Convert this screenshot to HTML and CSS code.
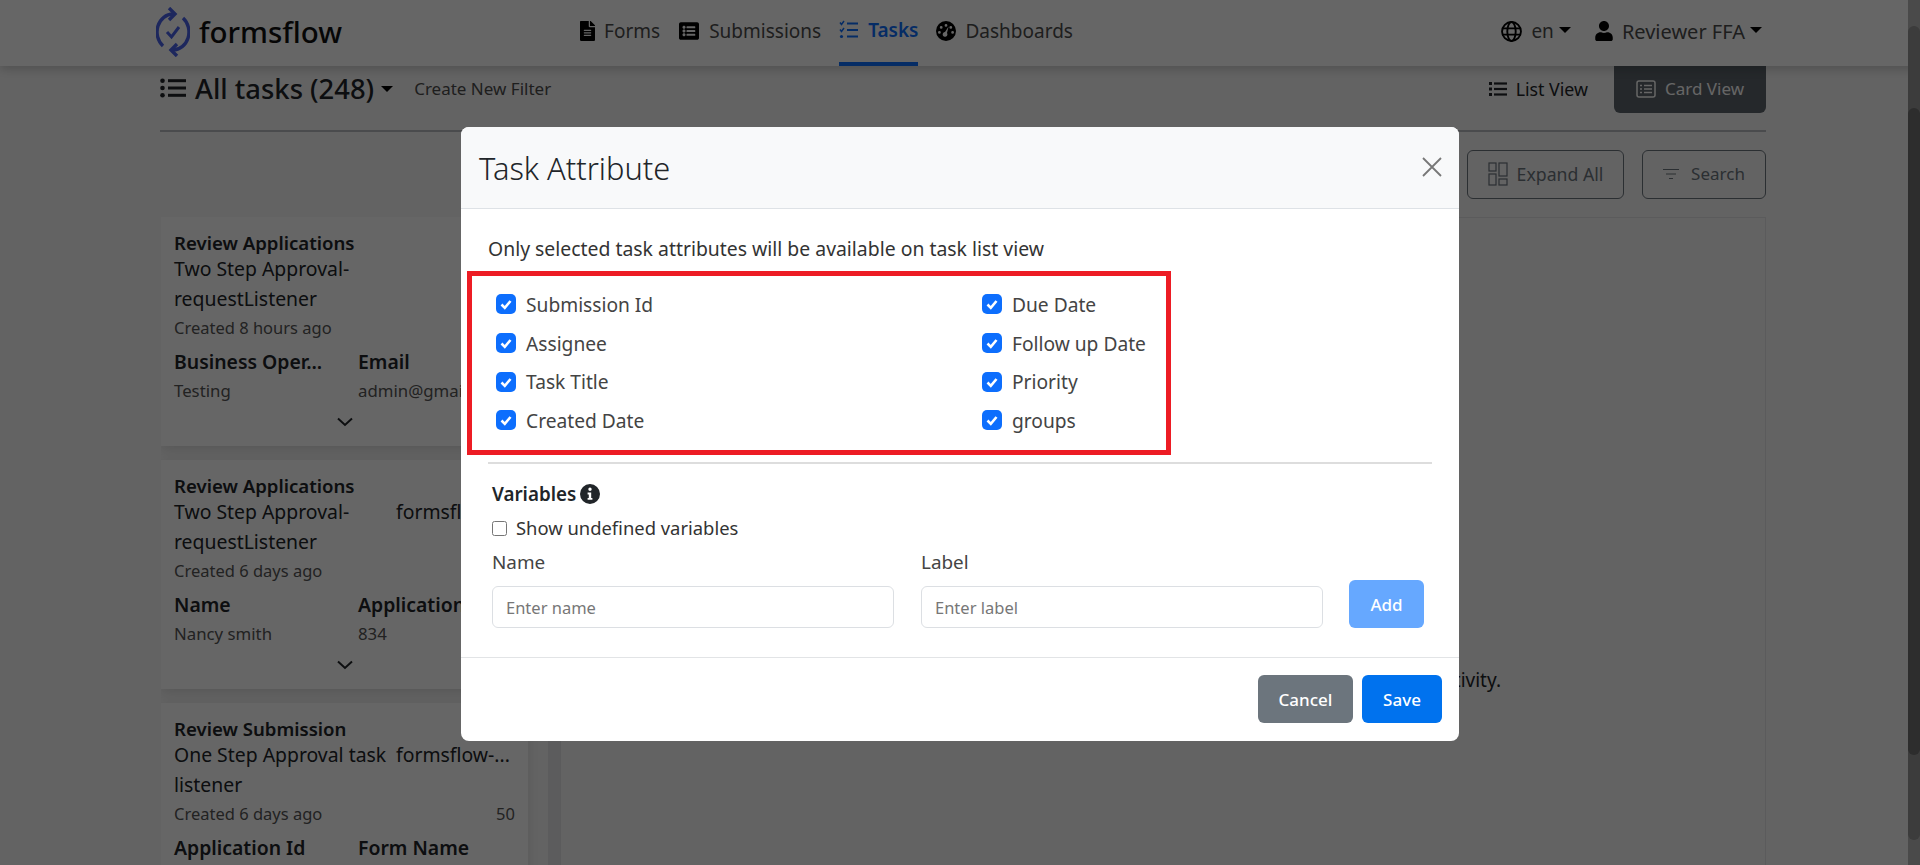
FILE: index.html
```html
<!DOCTYPE html>
<html lang="en">
<head>
    <meta charset="UTF-8">
    <meta name="viewport" content="width=device-width, initial-scale=1.0">
    <title>formsflow</title>
    <link rel="stylesheet" href="styles.css">
</head>
<body>
    <header class="topbar">
        <a class="logo">
            <svg class="logo-mark" viewBox="0 0 34 50" fill="none" stroke="#4a63e8">
                <path d="M17 7 A16 18 0 0 0 7 39" stroke-width="3.4"/>
                <path d="M13 1 L19 7 L13 13" stroke-width="3.4"/>
                <path d="M17 43 A16 18 0 0 0 27 11" stroke-width="3.4"/>
                <path d="M21 37 L15 43 L21 49" stroke-width="3.4"/>
                <path d="M11 25 L15.5 30 L23 20" stroke-width="3"/>
            </svg>
            <span>formsflow</span>
        </a>
        <nav class="nav">
            <a class="nav-item">
                <svg class="icon-forms" viewBox="0 0 384 512"><path d="M224 136V0H24C10.7 0 0 10.7 0 24v464c0 13.3 10.7 24 24 24h336c13.3 0 24-10.7 24-24V160H248c-13.2 0-24-10.8-24-24zm64 236c0 6.6-5.4 12-12 12H108c-6.6 0-12-5.4-12-12v-8c0-6.6 5.4-12 12-12h168c6.6 0 12 5.4 12 12v8zm0-64c0 6.6-5.4 12-12 12H108c-6.6 0-12-5.4-12-12v-8c0-6.6 5.4-12 12-12h168c6.6 0 12 5.4 12 12v8zm0-72v8c0 6.6-5.4 12-12 12H108c-6.6 0-12-5.4-12-12v-8c0-6.6 5.4-12 12-12h168c6.6 0 12 5.4 12 12zm96-114.1v6.1H256V0h6.1c6.4 0 12.5 2.5 17 7l97.9 98c4.5 4.5 7 10.6 7 16.9z"/></svg>
                Forms
            </a>
            <a class="nav-item">
                <svg class="icon-subs" viewBox="0 0 512 512"><path d="M464 480H48c-26.51 0-48-21.49-48-48V80c0-26.51 21.49-48 48-48h416c26.51 0 48 21.49 48 48v352c0 26.51-21.49 48-48 48zM128 120c-22.091 0-40 17.909-40 40s17.909 40 40 40 40-17.909 40-40-17.909-40-40-40zm0 96c-22.091 0-40 17.909-40 40s17.909 40 40 40 40-17.909 40-40-17.909-40-40-40zm0 96c-22.091 0-40 17.909-40 40s17.909 40 40 40 40-17.909 40-40-17.909-40-40-40zm288-136v-32c0-6.627-5.373-12-12-12H204c-6.627 0-12 5.373-12 12v32c0 6.627 5.373 12 12 12h200c6.627 0 12-5.373 12-12zm0 96v-32c0-6.627-5.373-12-12-12H204c-6.627 0-12 5.373-12 12v32c0 6.627 5.373 12 12 12h200c6.627 0 12-5.373 12-12zm0 96v-32c0-6.627-5.373-12-12-12H204c-6.627 0-12 5.373-12 12v32c0 6.627 5.373 12 12 12h200c6.627 0 12-5.373 12-12z"/></svg>
                Submissions
            </a>
            <a class="nav-item active">
                <svg class="icon-tasks" viewBox="0 0 20 20" fill="none" stroke="currentColor">
                    <path d="M1 2.5 L2.5 4.5 L5 1" stroke-width="1.5"/>
                    <path d="M1 9.5 L2.5 11.5 L5 8" stroke-width="1.5"/>
                    <circle cx="2.5" cy="16.5" r="1.6" fill="currentColor" stroke="none"/>
                    <path d="M8 3.5 H19 M8 10 H19 M8 16.5 H19" stroke-width="2.2"/>
                </svg>
                Tasks
            </a>
            <a class="nav-item">
                <svg class="icon-dash" viewBox="0 0 20 20">
                    <path fill-rule="evenodd" d="M10 0a10 10 0 1 1 0 20a10 10 0 0 1 0-20zM10 3a1.4 1.4 0 1 0 0 2.8a1.4 1.4 0 0 0 0-2.8zM5.2 5a1.4 1.4 0 1 0 0 2.8a1.4 1.4 0 0 0 0-2.8zM14.8 5a1.4 1.4 0 1 0 0 2.8a1.4 1.4 0 0 0 0-2.8zM3.4 10a1.4 1.4 0 1 0 0 2.8a1.4 1.4 0 0 0 0-2.8zM16.6 10a1.4 1.4 0 1 0 0 2.8a1.4 1.4 0 0 0 0-2.8zM12.6 5.6L9 11a2.4 2.4 0 1 0 2 1z"/>
                </svg>
                Dashboards
            </a>
        </nav>
        <div class="topbar-right">
            <a class="nav-item lang">
                <svg class="icon-globe" viewBox="0 0 20 20" fill="none" stroke="currentColor" stroke-width="1.8">
                    <circle cx="10" cy="10" r="9"/>
                    <ellipse cx="10" cy="10" rx="4" ry="9"/>
                    <path d="M1 7 H19 M1 13 H19"/>
                </svg>
                en<i class="caret"></i>
            </a>
            <a class="nav-item user">
                <svg class="icon-user" viewBox="0 0 448 512"><path d="M224 256c70.7 0 128-57.3 128-128S294.7 0 224 0 96 57.3 96 128s57.3 128 128 128zm89.6 32h-16.7c-22.2 10.2-46.9 16-72.9 16s-50.6-5.8-72.9-16h-16.7C60.2 288 0 348.2 0 422.4V464c0 26.5 21.5 48 48 48h352c26.5 0 48-21.5 48-48v-41.6c0-74.2-60.2-134.4-134.4-134.4z"/></svg>
                Reviewer FFA<i class="caret"></i>
            </a>
        </div>
    </header>

    <main class="page">
        <div class="toolbar">
            <div class="filter-title">
                <svg class="icon-list-lg" viewBox="0 0 26 20">
                    <circle cx="2.5" cy="2.8" r="2.3"/><circle cx="2.5" cy="10" r="2.3"/><circle cx="2.5" cy="17.2" r="2.3"/>
                    <rect x="8" y="1.2" width="18" height="3"/><rect x="8" y="8.5" width="18" height="3"/><rect x="8" y="15.8" width="18" height="3"/>
                </svg>
                <h1>All tasks (248)</h1>
                <i class="caret"></i>
                <a class="new-filter">Create New Filter</a>
            </div>
            <div class="view-switch">
                <a class="view-list">
                    <svg viewBox="0 0 18 16">
                        <rect x="0" y="1" width="3" height="3"/><rect x="0" y="6.5" width="3" height="3"/><rect x="0" y="12" width="3" height="3"/>
                        <rect x="5" y="1.4" width="13" height="2.2"/><rect x="5" y="6.9" width="13" height="2.2"/><rect x="5" y="12.4" width="13" height="2.2"/>
                    </svg>
                    List View
                </a>
                <a class="view-card">
                    <svg viewBox="0 0 20 18" fill="none" stroke="currentColor" stroke-width="1.5">
                        <rect x="1" y="1" width="18" height="16" rx="2"/>
                        <path d="M4 5.5 H6 M8 5.5 H16 M4 9 H6 M8 9 H16 M4 12.5 H6 M8 12.5 H16"/>
                    </svg>
                    Card View
                </a>
            </div>
        </div>

        <div class="actions">
            <a class="outline-btn">
                <svg class="icon-expand" viewBox="0 0 20 24" fill="none" stroke="currentColor" stroke-width="1.2">
                    <rect x="1" y="1" width="7" height="8"/><rect x="11" y="1" width="8" height="13"/>
                    <rect x="1" y="12" width="7" height="11"/><rect x="11" y="17" width="8" height="6"/>
                </svg>
                Expand All
            </a>
            <a class="outline-btn search-btn">
                <svg class="icon-filter" viewBox="0 0 16 12" fill="none" stroke="currentColor" stroke-width="1.2">
                    <path d="M0 1.5 H16 M3 6 H13 M6 10.5 H10"/>
                </svg>
                Search
            </a>
        </div>

        <div class="content">
            <div class="task-list">
                <article class="task-card">
                    <h3>Review Applications</h3>
                    <div class="task-row">
                        <div class="task-name">Two Step Approval-requestListener</div>
                        <div class="task-app"></div>
                    </div>
                    <div class="task-meta"><span>Created 8 hours ago</span></div>
                    <div class="task-vars">
                        <div><b>Business Oper...</b><span>Testing</span></div>
                        <div><b>Email</b><span>admin@gmail.com</span></div>
                    </div>
                    <svg class="chevron" viewBox="0 0 16 10" fill="none" stroke="currentColor" stroke-width="2"><path d="M1 1.5 L8 8 L15 1.5"/></svg>
                </article>
                <article class="task-card">
                    <h3>Review Applications</h3>
                    <div class="task-row">
                        <div class="task-name">Two Step Approval-requestListener</div>
                        <div class="task-app">formsflow-...</div>
                    </div>
                    <div class="task-meta"><span>Created 6 days ago</span></div>
                    <div class="task-vars">
                        <div><b>Name</b><span>Nancy smith</span></div>
                        <div><b>Application Id</b><span>834</span></div>
                    </div>
                    <svg class="chevron" viewBox="0 0 16 10" fill="none" stroke="currentColor" stroke-width="2"><path d="M1 1.5 L8 8 L15 1.5"/></svg>
                </article>
                <article class="task-card">
                    <h3>Review Submission</h3>
                    <div class="task-row">
                        <div class="task-name">One Step Approval task listener</div>
                        <div class="task-app">formsflow-...</div>
                    </div>
                    <div class="task-meta"><span>Created 6 days ago</span><span>50</span></div>
                    <div class="task-vars">
                        <div><b>Application Id</b></div>
                        <div><b>Form Name</b></div>
                    </div>
                </article>
            </div>
            <section class="task-detail">
                <p>Please select a task from the list to view its details and activity.</p>
            </section>
        </div>
    </main>

    <div class="backdrop">
        <div class="modal">
            <div class="modal-header">
                <h2>Task Attribute</h2>
                <svg class="modal-close" viewBox="0 0 20 20" fill="none" stroke="currentColor" stroke-width="1.8"><path d="M1 1 L19 19 M19 1 L1 19"/></svg>
            </div>
            <div class="modal-body">
                <p class="hint">Only selected task attributes will be available on task list view</p>
                <div class="attr-grid">
                    <label class="attr"><input type="checkbox" checked> Submission Id</label>
                    <label class="attr"><input type="checkbox" checked> Due Date</label>
                    <label class="attr"><input type="checkbox" checked> Assignee</label>
                    <label class="attr"><input type="checkbox" checked> Follow up Date</label>
                    <label class="attr"><input type="checkbox" checked> Task Title</label>
                    <label class="attr"><input type="checkbox" checked> Priority</label>
                    <label class="attr"><input type="checkbox" checked> Created Date</label>
                    <label class="attr"><input type="checkbox" checked> groups</label>
                </div>
                <hr class="divider">
                <div class="variables">
                    <h4>Variables
                        <svg class="icon-info" viewBox="0 0 20 20">
                            <path fill-rule="evenodd" d="M10 0a10 10 0 1 1 0 20a10 10 0 0 1 0-20zM10 3.6a1.7 1.7 0 1 0 0 3.4a1.7 1.7 0 0 0 0-3.4zM7.6 8.6v1.8h1.2v3.6H7.6v1.8h4.8v-1.8h-1.2V8.6z"/>
                        </svg>
                    </h4>
                    <label class="show-undefined"><input type="checkbox"> Show undefined variables</label>
                    <div class="var-form">
                        <div class="field">
                            <label>Name</label>
                            <input type="text" placeholder="Enter name">
                        </div>
                        <div class="field">
                            <label>Label</label>
                            <input type="text" placeholder="Enter label">
                        </div>
                        <button class="btn btn-add">Add</button>
                    </div>
                </div>
            </div>
            <div class="modal-footer">
                <button class="btn btn-cancel">Cancel</button>
                <button class="btn btn-save">Save</button>
            </div>
        </div>
    </div>

    <div class="scrollbar"><div class="thumb-outer"></div><div class="thumb-inner"></div></div>
</body>
</html>
```

FILE: styles.css
```css
* {
    box-sizing: border-box;
}
html, body {
    height: 100%;
}
body {
    margin: 0;
    overflow: hidden;
    background-color: #f8f8f8;
    color: #212529;
    font-family: "Noto Sans", Arial, sans-serif;
    font-size: 17px;
}
svg {
    flex: none;
}
svg:not([fill]) {
    fill: currentColor;
}
h1, h2, h3, h4, p {
    margin: 0;
    font-weight: inherit;
}

/* top bar */
.topbar {
    display: flex;
    align-items: center;
    height: 66px;
    padding: 0 158px 0 156px;
    background-color: #ffffff;
    box-shadow: 0 3px 10px rgba(0, 0, 0, 0.2);
    position: relative;
    z-index: 1;
}
.logo {
    display: flex;
    align-items: center;
    gap: 9px;
    font-size: 29.5px;
    font-weight: 500;
    line-height: 1;
    color: #111;
    padding-bottom: 2px;
}
.logo-mark {
    width: 34px;
    height: 50px;
}
.nav {
    display: flex;
    height: 100%;
    gap: 18px;
    margin-left: 238px;
}
.nav-item {
    display: flex;
    align-items: center;
    gap: 9px;
    height: 100%;
    padding-bottom: 4px;
    color: #4d4d4d;
    font-size: 19px;
}
.nav-item svg {
    color: #000;
}
.nav-item.active {
    color: #0d6efd;
    font-weight: 600;
    border-bottom: 4px solid #0d6efd;
    padding-bottom: 2px;
}
.nav-item.active svg {
    color: #0d6efd;
}
.icon-forms { width: 15px; height: 20px; }
.icon-subs { width: 22px; height: 20px; }
.icon-tasks { width: 20px; height: 20px; }
.icon-dash { width: 20px; height: 20px; }
.icon-globe { width: 21px; height: 21px; }
.icon-user { width: 18px; height: 20px; }
.topbar-right {
    display: flex;
    height: 100%;
    margin-left: auto;
    gap: 24px;
}
.user {
    font-size: 20px;
}
.caret {
    display: inline-block;
    margin-left: 5px;
    border-top: 6px solid #000;
    border-left: 6px solid transparent;
    border-right: 6px solid transparent;
}
.nav-item .caret {
    margin-left: -4px;
    margin-bottom: 3px;
}

/* page */
.page {
    padding: 0 154px 0 160px;
}
.toolbar {
    display: flex;
    justify-content: space-between;
    height: 66px;
    border-bottom: 2px solid #b9bcc0;
}
.filter-title {
    display: flex;
    align-items: center;
    height: 44px;
}
.icon-list-lg {
    width: 26px;
    height: 20px;
    margin-right: 9px;
}
.filter-title h1 {
    font-size: 27.4px;
    font-weight: 500;
}
.filter-title .caret {
    margin-left: 7px;
    margin-top: 1px;
    color: #333;
}
.new-filter {
    margin-left: 21px;
    font-size: 17px;
    color: #4d4d4d;
}
.view-switch {
    display: flex;
    align-items: flex-start;
    gap: 26px;
}
.view-list, .view-card {
    display: flex;
    align-items: center;
    gap: 9px;
    height: 47px;
    font-size: 17px;
}
.view-list {
    font-size: 17.8px;
    padding-bottom: 2px;
}
.view-list svg {
    width: 18px;
    height: 16px;
}
.view-card {
    width: 152px;
    justify-content: center;
    background-color: #5c646b;
    color: #ffffff;
    border-radius: 0 0 6px 6px;
    padding-bottom: 2px;
}
.view-card svg {
    width: 20px;
    height: 18px;
}
.actions {
    display: flex;
    justify-content: flex-end;
    gap: 18px;
    margin-top: 18px;
}
.outline-btn {
    display: flex;
    align-items: center;
    justify-content: center;
    gap: 9px;
    width: 157px;
    height: 49px;
    padding-bottom: 2px;
    border: 1px solid #6c757d;
    border-radius: 6px;
    color: #6c757d;
    font-size: 17.7px;
}
.search-btn {
    width: 124px;
    gap: 12px;
    font-size: 17px;
}
.icon-expand { width: 20px; height: 24px; }
.icon-filter { width: 16px; height: 12px; }

/* task list and detail */
.content {
    display: flex;
    margin-top: 18px;
    margin-left: 1px;
}
.task-list {
    width: 399px;
    flex: none;
    border-right: 12px solid #e6e7e9;
    padding-right: 20px;
    height: 660px;
    overflow: hidden;
}
.task-card {
    background-color: #ffffff;
    padding: 13px 13px 0;
    height: 229px;
    margin-bottom: 14px;
    box-shadow: 0 4px 12px rgba(0, 0, 0, 0.12);
    position: relative;
}
.task-card h3 {
    font-size: 18.6px;
    font-weight: 600;
    line-height: 26px;
}
.task-row {
    display: grid;
    grid-template-columns: 222px 1fr;
    line-height: 30px;
    font-size: 19.4px;
    margin-top: -2px;
}
.task-name {
    width: 218px;
}
.task-meta {
    display: flex;
    justify-content: space-between;
    font-size: 16.5px;
    line-height: 28px;
    color: #555;
}
.task-vars {
    display: grid;
    grid-template-columns: 184px 1fr;
    margin-top: 6px;
}
.task-vars b {
    display: block;
    font-size: 19.4px;
    font-weight: 600;
    line-height: 28px;
    white-space: nowrap;
}
.task-vars span {
    display: block;
    font-size: 16.8px;
    line-height: 30px;
    color: #555;
    white-space: nowrap;
}
.chevron {
    display: block;
    width: 16px;
    height: 10px;
    margin: 11px 0 0 163px;
}
.task-detail {
    flex: 1;
    height: 660px;
    border: 1px solid #e3e4e6;
    padding: 449px 264px 0 0;
    text-align: right;
    font-size: 19px;
}

/* modal */
.backdrop {
    position: fixed;
    inset: 0;
    z-index: 5;
    padding-top: 127px;
    background-color: rgba(0, 0, 0, 0.6);
}
.modal {
    width: 998px;
    margin: 0 auto;
    background-color: #ffffff;
    border-radius: 8px;
    overflow: hidden;
}
.modal-header {
    display: flex;
    justify-content: space-between;
    align-items: center;
    height: 82px;
    padding: 0 17px 0 18px;
    background-color: #f8f9fa;
    border-bottom: 1px solid #dee2e6;
}
.modal-header h2 {
    font-size: 30.8px;
    font-weight: 300;
}
.modal-close {
    width: 20px;
    height: 20px;
    color: #777;
    margin-top: -2px;
}
.modal-body {
    padding: 27px 27px 0;
    height: 448px;
}
.hint {
    font-size: 19.4px;
    line-height: 26px;
    color: #333;
}
.attr-grid {
    display: grid;
    grid-template-columns: 486px 1fr;
    grid-auto-rows: 38.7px;
    align-items: center;
    width: 704px;
    height: 184px;
    margin: 9px 0 0 -21px;
    padding: 9px 0 0 24px;
    border: 5px solid #ed1c24;
}
.attr, .show-undefined {
    display: flex;
    align-items: center;
    gap: 10px;
    font-size: 19.2px;
    color: #444;
}
.attr input {
    appearance: none;
    width: 20px;
    height: 20px;
    margin: 0;
    border-radius: 5px;
    background: #0d6efd url("data:image/svg+xml,%3Csvg xmlns='http://www.w3.org/2000/svg' viewBox='0 0 20 20'%3E%3Cpath d='M5.5 10.5 L8.8 13.8 L14.5 7' fill='none' stroke='white' stroke-width='2.6'/%3E%3C/svg%3E") center no-repeat;
}
.divider {
    border: 0;
    border-top: 2px solid #ddd;
    margin: 7px 0 0;
}
.variables {
    padding: 17px 4px 0 4px;
}
.variables h4 {
    display: flex;
    align-items: center;
    gap: 4px;
    font-size: 18.8px;
    font-weight: 600;
    line-height: 26px;
    color: #212529;
}
.icon-info {
    width: 20px;
    height: 20px;
}
.show-undefined {
    gap: 9px;
    font-size: 18.4px;
    line-height: 26px;
    margin-top: 8px;
    color: #333;
}
.show-undefined input {
    width: 15px;
    height: 15px;
    margin: 0;
}
.var-form {
    display: flex;
    gap: 26px;
    margin-top: 9px;
    align-items: flex-end;
}
.field {
    width: 402px;
}
.field:first-child {
    margin-right: 1px;
}
.field label {
    display: block;
    font-size: 18.9px;
    line-height: 24px;
    margin-bottom: 12px;
    color: #444;
}
.field input {
    display: block;
    width: 100%;
    height: 42px;
    padding: 0 13px;
    border: 1px solid #dcdfe3;
    border-radius: 6px;
    font-family: inherit;
    font-size: 16.5px;
}
.field input::placeholder {
    color: #777;
}
.btn {
    height: 48px;
    border: 0;
    border-radius: 6px;
    color: #ffffff;
    font-family: inherit;
    font-size: 17px;
    font-weight: 500;
}
.btn-add {
    width: 75px;
    margin-bottom: 0;
    background-color: #66a8ff;
}
.modal-footer {
    display: flex;
    justify-content: flex-end;
    gap: 9px;
    padding: 17px 17px 18px 0;
    border-top: 1px solid #e2e4e6;
    height: 84px;
}
.btn-cancel {
    width: 95px;
    background-color: #6c757d;
}
.btn-save {
    width: 80px;
    background-color: #0072ee;
}

.scrollbar {
    position: fixed;
    top: 0;
    right: 0;
    bottom: 0;
    z-index: 6;
    width: 12px;
    background-color: #4a4a4a;
}
.thumb-outer, .thumb-inner {
    position: absolute;
    left: 0;
    right: 0;
    border-radius: 6px;
}
.thumb-outer {
    top: 26px;
    height: 814px;
    background-color: #3c3c3c;
}
.thumb-inner {
    top: 108px;
    height: 647px;
    background-color: #2d2d2d;
}
```
